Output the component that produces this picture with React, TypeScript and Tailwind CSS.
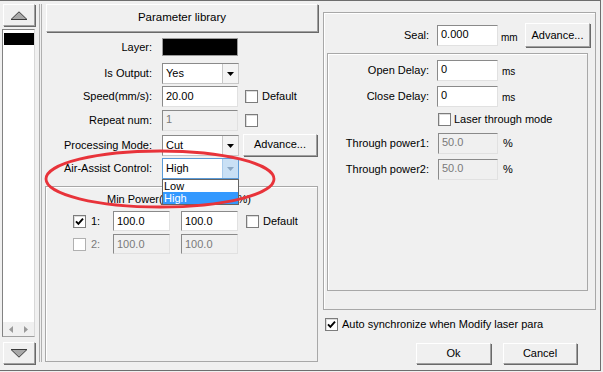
import React from 'react';

// Win-style dialog pieces
const Btn = ({ children, className = '' }: { children?: React.ReactNode; className?: string }) => (
  <div
    className={`flex items-center justify-center bg-[#f0f0f0] border border-t-white border-l-white border-r-[#a0a0a0] border-b-[#a0a0a0] shadow-[1px_1px_0_#696969] ${className}`}
  >
    {children}
  </div>
);

const Edit = ({ value, disabled, top, className = '' }: { value: string; disabled?: boolean; top?: boolean; className?: string }) => (
  <div
    className={`flex ${top ? 'items-start pt-[3px]' : 'items-center'} pl-[3px] border border-t-[#8a8a8a] border-l-[#8a8a8a] border-r-[#e1e1e1] border-b-[#e1e1e1] ${
      disabled ? 'bg-[#f0f0f0] text-[#7a7a7a]' : 'bg-white'
    } ${className}`}
  >
    {value}
  </div>
);

const Arrow = ({ color = '#000' }: { color?: string }) => (
  <svg width="7" height="4" viewBox="0 0 7 4">
    <path d="M0 0 H7 L3.5 4 Z" fill={color} />
  </svg>
);

const Combo = ({ value, focused }: { value: string; focused?: boolean }) => (
  <div
    className={`w-[77px] h-[21px] flex bg-white border ${
      focused ? 'border-[#5b9bd8]' : 'border-t-[#8a8a8a] border-l-[#8a8a8a] border-r-[#c8c8c8] border-b-[#c8c8c8]'
    }`}
  >
    <div className="flex-1 flex items-center pl-[3px]">{value}</div>
    <div
      className={`w-[16px] flex items-center justify-center border-l ${
        focused ? 'bg-[#c9e0f5] border-[#a9cbec]' : 'bg-[#f4f4f4] border-[#c8c8c8]'
      }`}
    >
      <Arrow color={focused ? '#8aa7c4' : '#000'} />
    </div>
  </div>
);

const Check = ({ checked, disabled }: { checked?: boolean; disabled?: boolean }) => (
  <div
    className={`w-[13px] h-[13px] shrink-0 flex items-center justify-center border ${
      disabled ? 'border-[#b0b0b0] bg-white' : 'border-[#7c7c7c] bg-white shadow-[inset_1px_1px_0_#dcdcdc]'
    }`}
  >
    {checked && (
      <svg width="9" height="9" viewBox="0 0 9 9">
        <path d="M1 4.3 L3.4 6.8 L8 1.6" stroke="#000" strokeWidth="1.9" fill="none" />
      </svg>
    )}
  </div>
);

const Row = ({ label, children, className = '' }: { label: string; children: React.ReactNode; className?: string }) => (
  <div className={`flex items-center h-[21px] ${className}`}>
    <div className="w-[107px] text-right">{label}</div>
    <div className="ml-[10px] flex items-center">{children}</div>
  </div>
);

const RRow = ({ label, children, className = '' }: { label: string; children: React.ReactNode; className?: string }) => (
  <div className={`flex items-center h-[21px] ${className}`}>
    <div className="w-[101px] text-right">{label}</div>
    {children}
  </div>
);

export default function App() {
  return (
    <div className="w-[603px] h-[372px] bg-[#f0f0f0] relative overflow-hidden">
      <div className="w-[601px] h-[371px] border-t border-r border-b border-[#6e6e6e] flex text-[11px] leading-none text-black font-['Liberation_Sans',Arial,sans-serif]">
        {/* layer list column */}
        <div className="ml-[2px] w-[33px] flex flex-col">
          <Btn className="mt-[3px] ml-[1px] w-[32px] h-[22px]">
            <svg width="18" height="9" viewBox="0 0 18 9">
              <path d="M1 8.5 L9 0.8 L17 8.5 Z" fill="#a8a8a8" stroke="#3c3c3c" strokeWidth="1" />
            </svg>
          </Btn>
          <div className="mt-[3px] h-[308px] bg-white border border-t-[#828282] border-l-[#828282] border-r-[#d8d8d8] border-b-[#a0a0a0] flex flex-col">
            <div className="mt-[3px] ml-[1px] h-[12px] bg-black" />
            <div className="flex-1" />
            <div className="h-[14px] bg-[#f0f0f0] flex items-center gap-[11px] pl-[6px]">
              <svg width="4" height="7" viewBox="0 0 4 7">
                <path d="M4 0 V7 L0 3.5 Z" fill="#9a9a9a" />
              </svg>
              <svg width="4" height="7" viewBox="0 0 4 7">
                <path d="M0 0 V7 L4 3.5 Z" fill="#9a9a9a" />
              </svg>
            </div>
          </div>
          <Btn className="mt-[5px] ml-[1px] w-[32px] h-[22px]">
            <svg width="18" height="9" viewBox="0 0 18 9">
              <path d="M1 0.5 L9 8.2 L17 0.5 Z" fill="#a8a8a8" stroke="#3c3c3c" strokeWidth="1" />
            </svg>
          </Btn>
        </div>

        {/* splitter */}
        <div className="ml-[4px] mt-[3px] w-[3px] h-[358px] border-l border-r border-[#b0b0b0]" />

        {/* laser parameters */}
        <div className="ml-[3px] mt-[3px] w-[273px] h-[358px] flex flex-col">
          <Btn className="h-[28px] ml-[1px] text-[11.5px]">Parameter library</Btn>

          <div className="flex items-center h-[18px] mt-[6px]">
            <div className="w-[107px] text-right">Layer:</div>
            <div className="ml-[10px] w-[76px] h-[18px] bg-black border border-[#9a9a9a]" />
          </div>
          <Row label="Is Output:" className="mt-[7px]">
            <Combo value="Yes" />
          </Row>
          <Row label="Speed(mm/s):" className="mt-[2px]">
            <Edit value="20.00" className="w-[76px] h-[21px]" />
            <div className="ml-[7px]">
              <Check />
            </div>
            <span className="ml-[4px]">Default</span>
          </Row>
          <Row label="Repeat num:" className="mt-[3px]">
            <Edit value="1" disabled top className="w-[76px] h-[21px]" />
            <div className="ml-[7px]">
              <Check />
            </div>
          </Row>
          <Row label="Processing Mode:" className="mt-[4px]">
            <Combo value="Cut" />
            <Btn className="ml-[4px] w-[74px] h-[22px] -mt-[2px]">Advance...</Btn>
          </Row>
          <Row label="Air-Assist Control:" className="mt-[2px]">
            <Combo value="High" focused />
          </Row>

          <div className="mt-[7px] flex-1 border border-[#a8a8a8] shadow-[inset_1px_1px_0_#ffffff] flex flex-col">
            {/* the open drop-down hides the middle of this caption */}
            <div className="mt-[6px] h-[13px] ml-[61px] w-[144px] flex items-center justify-between">
              <span>Min Power(</span>
              <span>%)</span>
            </div>
            <div className="mt-[5px] h-[20px] flex items-center">
              <div className="ml-[27px]">
                <Check checked />
              </div>
              <span className="ml-[5px] w-[22px]">1:</span>
              <Edit value="100.0" className="w-[57px] h-[20px]" />
              <Edit value="100.0" className="ml-[11px] w-[57px] h-[20px]" />
              <div className="ml-[8px]">
                <Check />
              </div>
              <span className="ml-[4px]">Default</span>
            </div>
            <div className="mt-[3px] h-[20px] flex items-center">
              <div className="ml-[27px]">
                <Check disabled />
              </div>
              <span className="ml-[5px] w-[22px] text-[#7a7a7a]">2:</span>
              <Edit value="100.0" disabled className="w-[57px] h-[20px]" />
              <Edit value="100.0" disabled className="ml-[11px] w-[57px] h-[20px]" />
            </div>
          </div>
        </div>

        {/* seal / delay settings */}
        <div className="ml-[5px] flex flex-col">
          <div className="mt-[11px] w-[273px] h-[298px] border border-[#a8a8a8] shadow-[inset_1px_1px_0_#ffffff] flex flex-col">
            <div className="mt-[10px] h-[24px] flex items-center">
              <div className="w-[105px] text-right">Seal:</div>
              <Edit value="0.000" top className="ml-[8px] w-[61px] h-[21px]" />
              <span className="ml-[3px] w-[24px] text-[10px] pt-[5px]">mm</span>
              <Btn className="w-[65px] h-[24px]">Advance...</Btn>
            </div>
            <div className="mt-[6px] ml-[3px] w-[261px] h-[238px] border border-[#a8a8a8] shadow-[inset_1px_1px_0_#ffffff] flex flex-col">
              <RRow label="Open Delay:" className="mt-[6px]">
                <Edit value="0" top className="ml-[8px] w-[61px] h-[21px]" />
                <span className="ml-[4px] text-[10px] pt-[2px]">ms</span>
              </RRow>
              <RRow label="Close Delay:" className="mt-[5px]">
                <Edit value="0" top className="ml-[8px] w-[61px] h-[21px]" />
                <span className="ml-[4px] text-[10px] pt-[2px]">ms</span>
              </RRow>
              <div className="mt-[6px] h-[13px] flex items-center">
                <div className="ml-[110px]">
                  <Check />
                </div>
                <span className="ml-[3px]">Laser through mode</span>
              </div>
              <RRow label="Through power1:" className="mt-[7px]">
                <Edit value="50.0" disabled top className="ml-[9px] w-[60px] h-[21px]" />
                <span className="ml-[5px]">%</span>
              </RRow>
              <RRow label="Through power2:" className="mt-[5px]">
                <Edit value="50.0" disabled top className="ml-[9px] w-[60px] h-[21px]" />
                <span className="ml-[5px]">%</span>
              </RRow>
            </div>
          </div>
          <div className="mt-[8px] ml-[2px] h-[13px] flex items-center">
            <Check checked />
            <span className="ml-[4px]">Auto synchronize when Modify laser para</span>
          </div>
          <div className="mt-[12px] h-[21px] flex">
            <Btn className="ml-[93px] w-[75px] h-[21px]">Ok</Btn>
            <Btn className="ml-[12px] w-[74px] h-[21px]">Cancel</Btn>
          </div>
        </div>
      </div>

      {/* open drop-down list */}
      <div className="absolute left-[162px] top-[179px] w-[77px] h-[26px] bg-white border border-[#646464] flex flex-col text-[11px] leading-none font-['Liberation_Sans',Arial,sans-serif]">
        <div className="h-[12px] flex items-center pl-[1px]">Low</div>
        <div className="h-[12px] flex items-center pl-[1px] bg-[#3399ff] text-white">High</div>
      </div>

      {/* red annotation */}
      <svg className="absolute left-0 top-0 pointer-events-none" width="603" height="372" viewBox="0 0 603 372">
        <ellipse cx="160" cy="179" rx="114" ry="28" fill="none" stroke="#e8333a" strokeWidth="2.8" />
      </svg>
    </div>
  );
}
